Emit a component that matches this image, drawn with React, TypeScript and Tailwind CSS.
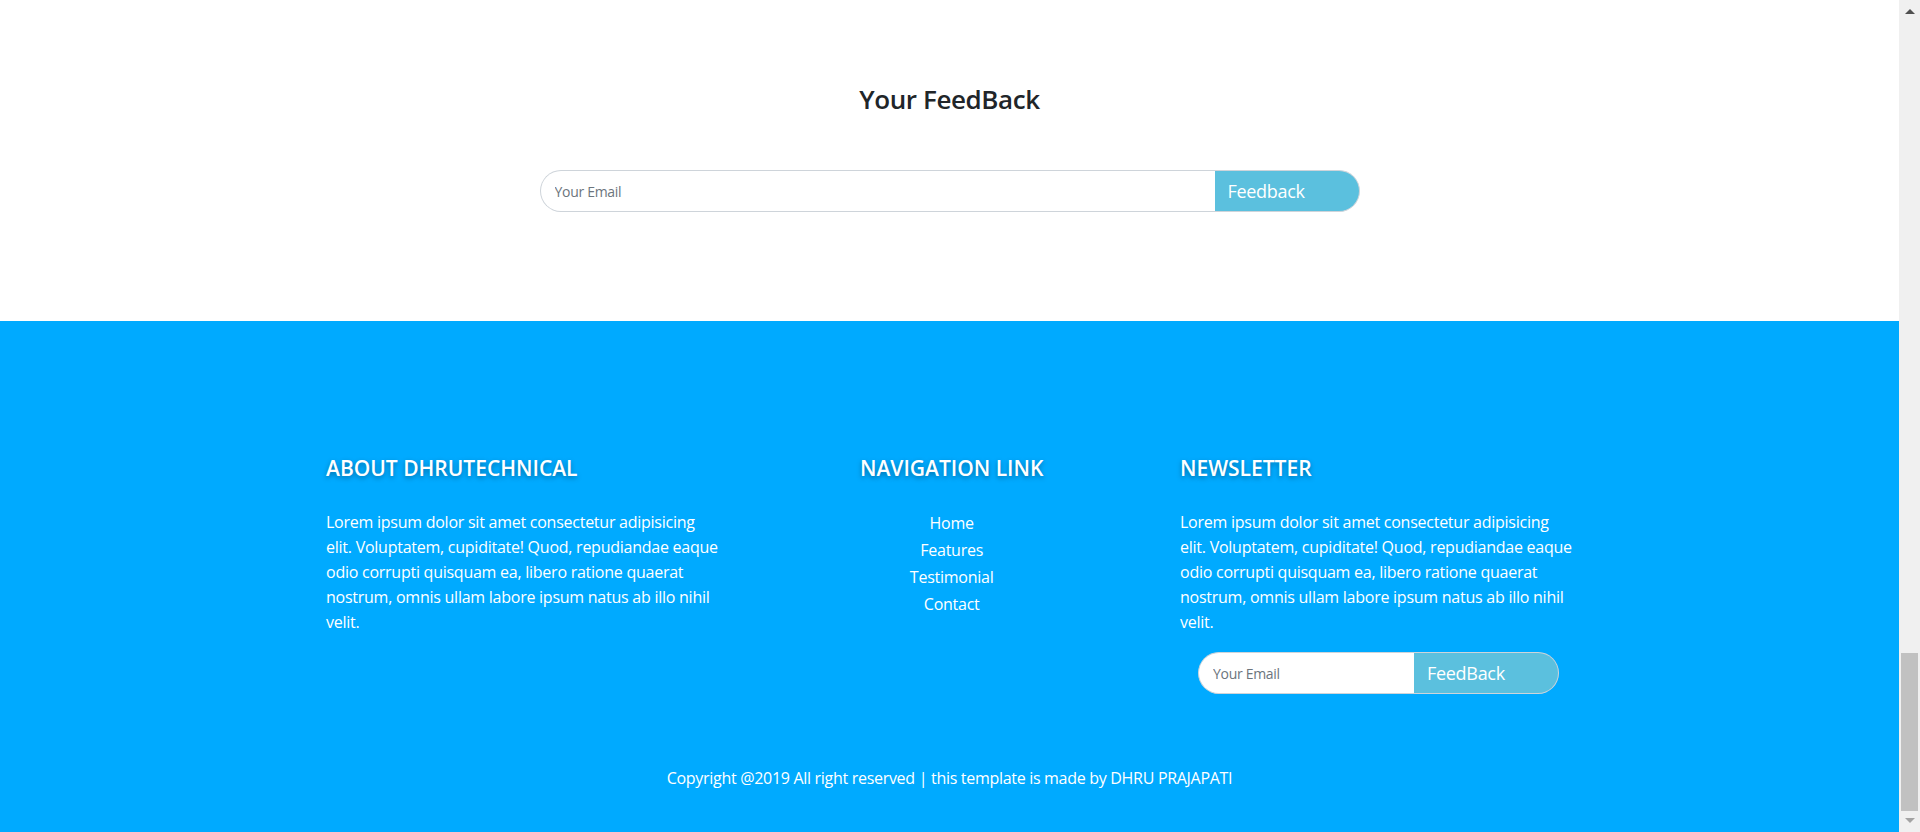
import React from "react"

const font = { fontFamily: '"Open Sans", "Noto Sans", sans-serif' }

function FeedbackForm({ btnText, className }: { btnText: string, className: string }) {
    return (
        <div className={`flex h-[42px] ${className}`}>
            <input
                className="flex-1 min-w-0 h-full rounded-l-full border border-r-0 border-[#ced4da] bg-white pl-[14px] text-[14px] tracking-[-0.3px] text-[#495057] outline-none placeholder:text-[#6c757d]"
                placeholder="Your Email"
            />
            <button className="h-full w-[145px] rounded-r-full border border-l-0 border-[#ced4da] bg-[#5bc0de] pl-[13px] text-left text-[18px] tracking-[-0.3px] text-white">
                {btnText}
            </button>
        </div>
    )
}

const lorem = "Lorem ipsum dolor sit amet consectetur adipisicing elit. Voluptatem, cupiditate! Quod, repudiandae eaque odio corrupti quisquam ea, libero ratione quaerat nostrum, omnis ullam labore ipsum natus ab illo nihil velit."

export default function App() {
    const headShadow = "[text-shadow:0_2px_5px_rgba(0,0,0,0.35)]"

    return (
        <div className="flex h-[832px] w-full overflow-hidden" style={font}>
            <div className="flex flex-1 flex-col">
                <section className="flex h-[321px] flex-col items-center bg-white pt-[83px]">
                    <h3 className="text-[26px] font-semibold leading-[32px] tracking-[-0.4px] text-[#212529]">Your FeedBack</h3>
                    <FeedbackForm btnText="Feedback" className="mt-[55px] w-[820px]" />
                </section>

                <footer className="flex flex-1 flex-col items-center bg-[#00aaff] pt-[135px] text-white">
                    <div className="ml-[4px] grid w-[1281px] grid-cols-[534px_320px_427px] tracking-[-0.25px]">
                        <div className="px-[15px]">
                            <h5 className={`text-[21px] font-semibold leading-[24px] tracking-normal ${headShadow}`}>ABOUT DHRUTECHNICAL</h5>
                            <p className="mt-[30px] w-[396px] text-[16px] leading-[25px]">{lorem}</p>
                        </div>
                        <div className="px-[15px]">
                            <div className="w-fit text-center">
                                <h5 className={`text-[21px] font-semibold leading-[24px] tracking-normal ${headShadow}`}>NAVIGATION LINK</h5>
                                <ul className="mt-[31px] flex flex-col gap-[3px] text-[16px] leading-[24px]">
                                    <li>Home</li>
                                    <li>Features</li>
                                    <li>Testimonial</li>
                                    <li>Contact</li>
                                </ul>
                            </div>
                        </div>
                        <div className="flex flex-col px-[15px]">
                            <h5 className={`text-[21px] font-semibold leading-[24px] tracking-normal ${headShadow}`}>NEWSLETTER</h5>
                            <p className="mt-[30px] w-[396px] text-[16px] leading-[25px]">{lorem}</p>
                            <FeedbackForm btnText="FeedBack" className="mt-[17px] w-[361px] self-center" />
                        </div>
                    </div>
                    <p className="mt-[72px] text-[16px] leading-[24px] tracking-[-0.3px]">
                        Copyright @2019 All right reserved | this template is made by DHRU PRAJAPATI
                    </p>
                </footer>
            </div>

            <div className="flex w-[21px] flex-col items-center bg-[#f0f0f0]">
                <div className="mt-[9px] h-0 w-0 border-x-[5px] border-b-[5px] border-x-transparent border-b-[#505050]" />
                <div className="flex-1" />
                <div className="h-[158px] w-[21px] px-[2px]">
                    <div className="h-full w-full bg-[#c1c1c1]" />
                </div>
                <div className="mb-[9px] mt-[7px] h-0 w-0 border-x-[5px] border-t-[5px] border-x-transparent border-t-[#a3a3a3]" />
            </div>
        </div>
    )
}
